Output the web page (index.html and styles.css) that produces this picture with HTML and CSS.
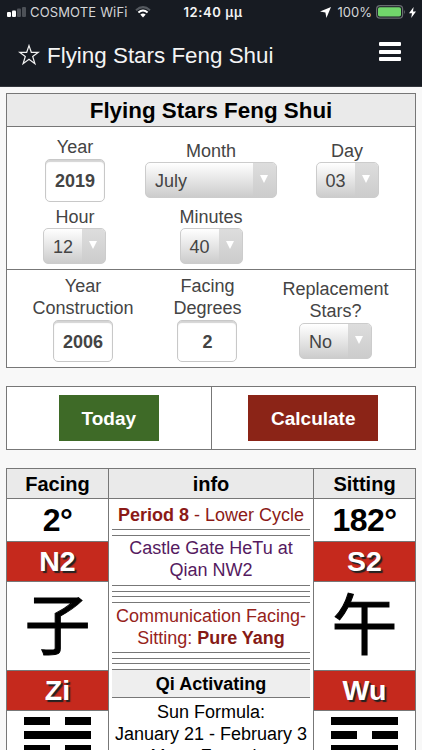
FILE: index.html
```html
<!DOCTYPE html>
<html lang="en">
<head>
  <meta charset="UTF-8" />
  <meta name="viewport" content="width=device-width, initial-scale=1.0" />
  <title>Flying Stars Feng Shui</title>
  <link rel="stylesheet" href="styles.css">
</head>
<body>

<header>
  <div class="status">
    <div class="status-left">
      <svg class="signal" width="19" height="10" viewBox="0 0 19 10">
        <rect x="0" y="5" width="4" height="5" rx="1" fill="#fff"/>
        <rect x="5" y="3.5" width="4" height="6.5" rx="1" fill="#fff"/>
        <rect x="10" y="1.5" width="4" height="8.5" rx="1" fill="#4d5157"/>
        <rect x="15" y="0" width="4" height="10" rx="1" fill="#4d5157"/>
      </svg>
      <span class="carrier">COSMOTE WiFi</span>
      <svg class="wifi" width="16" height="12" viewBox="0 0 16 12">
        <path d="M1 4.2 Q8 -2 15 4.2" fill="none" stroke="#555a60" stroke-width="2"/>
        <path d="M3.4 6.5 Q8 2.4 12.6 6.5" fill="none" stroke="#fff" stroke-width="2"/>
        <path d="M5.3 8.6 Q8 6.2 10.7 8.6 L8 11.5 Z" fill="#fff"/>
      </svg>
    </div>
    <span class="clock">12:40 μμ</span>
    <div class="status-right">
      <svg width="11" height="11" viewBox="0 0 11 11"><path d="M11 0 L6.4 11 L5.4 5.6 L0 4.6 Z" fill="#fff"/></svg>
      <span class="percent">100%</span>
      <svg class="battery" width="30" height="14" viewBox="0 0 30 14">
        <rect x=".6" y=".6" width="26" height="12.6" rx="3.4" fill="none" stroke="#686c70" stroke-width="1.2"/>
        <rect x="2" y="2.2" width="23" height="9.4" rx="1.8" fill="#71d66b"/>
        <path d="M28.2 4.8 Q30 7 28.2 9.2 Z" fill="#686c70"/>
      </svg>
      <svg width="7" height="11" viewBox="0 0 7 11"><path d="M4.6 0 L0 6.2 H3 L2.2 11 L7 4.4 H4 Z" fill="#fff"/></svg>
    </div>
  </div>
  <div class="bar">
    <svg class="star" width="22" height="22" viewBox="0 0 22 22">
      <path d="M11 1.6 L13.3 8.3 H20.4 L14.7 12.5 L16.9 19.7 L11 15.3 L5.1 19.7 L7.3 12.5 L1.6 8.3 H8.7 Z" fill="none" stroke="#f2f2f2" stroke-width="1.2"/>
    </svg>
    <span class="brand">Flying Stars Feng Shui</span>
    <div class="burger"><i></i><i></i><i></i></div>
  </div>
</header>

<main>
  <section class="box form">
    <h1>Flying Stars Feng Shui</h1>
    <div class="date">
      <label class="field year">Year<span class="input">2019</span></label>
      <label class="field month">Month<span class="select"><b>July</b><i></i></span></label>
      <label class="field day">Day<span class="select"><b>03</b><i></i></span></label>
      <label class="field hour">Hour<span class="select"><b>12</b><i></i></span></label>
      <label class="field minutes">Minutes<span class="select"><b>40</b><i></i></span></label>
    </div>
    <div class="house">
      <label class="field built">Year<br>Construction<span class="input">2006</span></label>
      <label class="field degrees">Facing<br>Degrees<span class="input">2</span></label>
      <label class="field replace">Replacement<br>Stars?<span class="select"><b>No</b><i></i></span></label>
    </div>
  </section>

  <section class="box buttons">
    <div><a class="btn today">Today</a></div>
    <div><a class="btn calculate">Calculate</a></div>
  </section>

  <section class="box chart">
    <div class="col">
      <h2>Facing</h2>
      <div class="deg">2°</div>
      <div class="red">N2</div>
      <div class="sign">子</div>
      <div class="red">Zi</div>
      <div class="trigram"><i class="broken"></i><i></i><i class="broken"></i></div>
    </div>
    <div class="col info">
      <h2>info</h2>
      <div class="line period"><b>Period 8</b> - Lower Cycle</div>
      <div class="rules two"></div>
      <div class="line castle">Castle Gate HeTu at<br>Qian NW2</div>
      <div class="rules"></div>
      <div class="line comm">Communication Facing-<br>Sitting: <b>Pure Yang</b></div>
      <div class="rules"></div>
      <div class="qi">Qi Activating</div>
      <div class="line formula">Sun Formula:<br>January 21 - February 3<br>Moon Formula:</div>
    </div>
    <div class="col">
      <h2>Sitting</h2>
      <div class="deg">182°</div>
      <div class="red">S2</div>
      <div class="sign">午</div>
      <div class="red">Wu</div>
      <div class="trigram"><i></i><i class="broken"></i><i></i></div>
    </div>
  </section>
</main>

</body>
</html>
```
FILE: styles.css
```css
* {
  margin: 0;
  padding: 0;
  box-sizing: border-box;
}

html, body {
  height: 100%;
  overflow: hidden;
  font-family: "Liberation Sans", Arial, sans-serif;
  background: #f8f8f8;
  color: #000;
}

svg {
  display: block;
  flex: none;
}

/* Header */
header {
  height: 87px;
  background: #171b22;
  border-bottom: 1px solid #33363c;
  color: #f4f4f4;
}

.status {
  height: 24px;
  display: grid;
  grid-template-columns: 1fr auto 1fr;
  align-items: center;
  padding: 0 6px 0 7px;
  font-family: Inter, "Liberation Sans", sans-serif;
  font-size: 13px;
}

.status-left, .status-right {
  display: flex;
  align-items: center;
}

.status-left {
  color: #d4d5d7;
}

.carrier {
  margin: 0 7px 0 4px;
  letter-spacing: 0.15px;
}

.wifi {
  margin-top: -1px;
}

.clock {
  font-weight: 600;
  letter-spacing: 0.6px;
  padding-left: 3px;
}

.status-right {
  justify-content: flex-end;
}

.percent {
  margin: 0 4px 0 7px;
  color: #d4d5d7;
}

.battery {
  margin-right: 3px;
}

.bar {
  display: flex;
  align-items: center;
  height: 62px;
  padding: 0 21px 0 18px;
}

.star {
  margin-right: 7px;
}

.brand {
  margin-top: 2px;
  font-size: 22.4px;
  line-height: 26px;
}

.burger {
  margin-left: auto;
  margin-top: -7px;
}

.burger i {
  display: block;
  width: 22px;
  height: 4px;
  border-radius: 1px;
  background: #fff;
}

.burger i + i {
  margin-top: 3.5px;
}

/* Boxes */
main {
  padding: 5px 6px 0;
}

.box {
  border: 1px solid #777;
  background: #fff;
}

.form {
  margin-top: 1px;
  height: 275px;
  color: #444;
}

h1 {
  height: 33px;
  line-height: 34px;
  text-align: center;
  font-size: 22.4px;
  color: #000;
  background: #eaeaea;
  border-bottom: 1px solid #777;
}

.date, .house {
  display: grid;
  grid-template-columns: 138px 132px 138px;
  justify-items: center;
  align-content: start;
}

.date {
  height: 143px;
  padding-top: 9px;
  row-gap: 4px;
  border-bottom: 1px solid #777;
}

.house {
  grid-template-columns: 152px 97px 159px;
  padding-top: 5px;
}

.field {
  display: flex;
  flex-direction: column;
  align-items: center;
  text-align: center;
  font-size: 18px;
  line-height: 22px;
}

.input {
  width: 60px;
  height: 43px;
  margin-top: 1px;
  border: 1px solid #c8c8c8;
  border-radius: 5px;
  box-shadow: inset 0 2px 1px #d4d4d4;
  font-weight: bold;
  font-size: 18px;
  line-height: 43px;
}

.house .input {
  height: 42px;
  line-height: 42px;
}

.select {
  display: flex;
  width: 63px;
  height: 36px;
  border: 1px solid #ccc;
  border-radius: 5px;
  overflow: hidden;
  background: linear-gradient(#fff, #ccc);
}

.select b {
  flex: 1;
  padding-left: 9px;
  text-align: left;
  font-weight: normal;
  line-height: 37px;
}

.select i {
  width: 23px;
  padding: 12px 0 0 7px;
  background: linear-gradient(#ddd, #ccc);
}

.select i::before {
  content: "";
  display: block;
  width: 0;
  border: 4.5px solid transparent;
  border-top: 8px solid #fff;
  border-bottom: 0;
}

.year, .hour {
  margin-right: 2px;
}

.hour .select {
  margin-right: 1px;
}

.month, .day {
  margin-top: 4px;
}

.day {
  margin-left: 2px;
}

.month .select {
  width: 132px;
}

.replace {
  margin-top: 3px;
}

.replace .select {
  width: 73px;
  margin-top: 1px;
}

/* Buttons */
.buttons {
  display: flex;
  height: 64px;
  margin-top: 18px;
}

.buttons div {
  flex: 1;
  display: flex;
  justify-content: center;
  align-items: center;
}

.buttons div + div {
  border-left: 1px solid #777;
}

.btn {
  height: 46px;
  margin-top: -1px;
  line-height: 47px;
  text-align: center;
  font-size: 19px;
  font-weight: bold;
  color: #fff;
}

.today {
  width: 100px;
  background: #3e6a27;
}

.calculate {
  width: 130px;
  background: #8b2417;
}

/* Chart */
.chart {
  display: grid;
  grid-template-columns: 101px 206px 101px;
  height: 400px;
  margin-top: 18px;
}

.info {
  border: solid #777;
  border-width: 0 1px;
}

.col {
  text-align: center;
}

h2 {
  height: 30px;
  line-height: 30px;
  font-size: 20px;
  background: #eaeaea;
  border-bottom: 1px solid #777;
}

.deg {
  height: 42px;
  line-height: 43px;
  font-size: 32px;
  font-weight: bold;
  letter-spacing: -0.6px;
}

.red {
  height: 41px;
  line-height: 39px;
  border: solid #777;
  border-width: 1px 0;
  background: #c5291d;
  color: #fff;
  font-size: 28.5px;
  font-weight: bold;
  text-shadow: 2px 2px 1px #222;
}

.sign {
  height: 88px;
  line-height: 76px;
  font-family: "Noto Sans CJK SC", sans-serif;
  font-size: 66px;
  -webkit-text-stroke: 1px #000;
}

.trigram {
  padding-top: 6px;
}

.trigram i {
  display: block;
  width: 67px;
  height: 8px;
  margin: 0 auto 6px;
  background: #000;
}

.trigram .broken {
  background: linear-gradient(90deg, #000 26px, #fff 26px, #fff 41px, #000 41px);
}

.line {
  font-size: 18px;
  line-height: 22px;
  white-space: nowrap;
}

.period {
  height: 30px;
  line-height: 33px;
  color: #8b1a17;
}

.castle {
  height: 50px;
  padding-top: 2px;
  color: #551a60;
}

.comm {
  height: 49px;
  padding-top: 2px;
  color: #96231b;
}

.comm b {
  color: #851a15;
}

/* stacked thin separators */
.rules {
  height: 18px;
  margin: 0 3px;
  background: repeating-linear-gradient(#777 0, #777 1px, #fff 1px, #fff 5.6px);
}

.rules.two {
  height: 7px;
  margin-bottom: -1px;
}

.qi {
  height: 28px;
  margin: 0 3px;
  line-height: 28px;
  background: #eee;
  border-bottom: 1px solid #777;
  font-size: 18px;
  font-weight: bold;
}

.formula {
  padding-top: 3px;
}
```
